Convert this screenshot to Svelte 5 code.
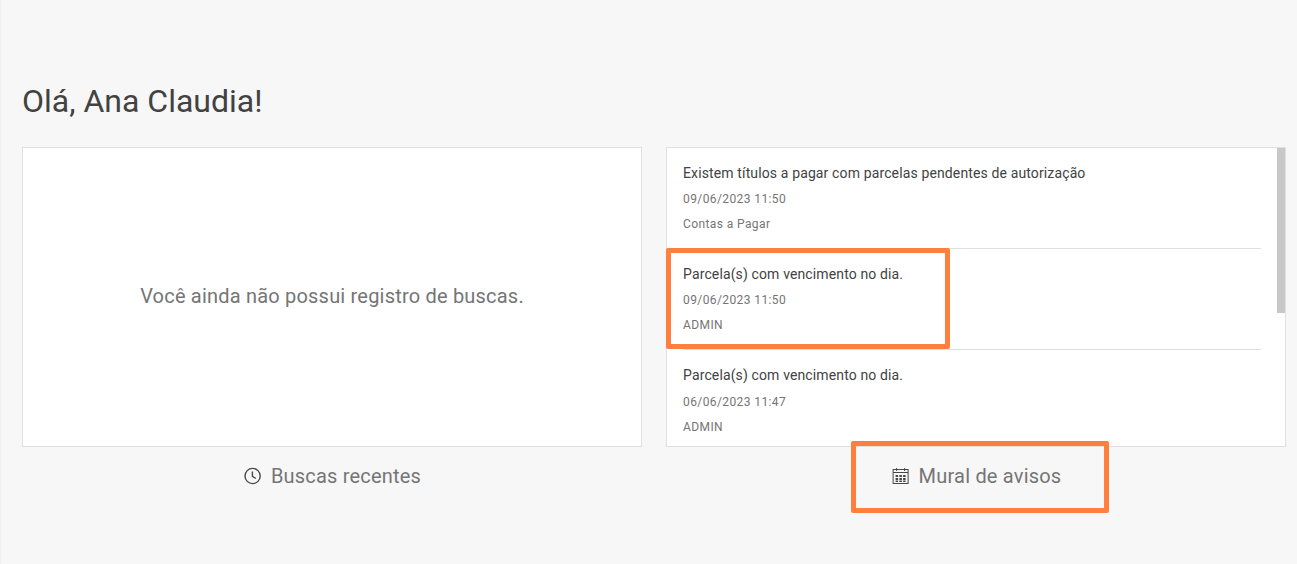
<script>
  const notices = [
    { title: 'Existem títulos a pagar com parcelas pendentes de autorização', date: '09/06/2023 11:50', origin: 'Contas a Pagar' },
    { title: 'Parcela(s) com vencimento no dia.', date: '09/06/2023 11:50', origin: 'ADMIN' },
    { title: 'Parcela(s) com vencimento no dia.', date: '06/06/2023 11:47', origin: 'ADMIN' }
  ];
</script>

<main class="page">
  <h1>Olá, Ana Claudia!</h1>
  <div class="columns">
    <section class="column">
      <div class="card empty">Você ainda não possui registro de buscas.</div>
      <div class="caption">
        <svg width="18" height="18" viewBox="-0.6 0 18 18" fill="none" stroke="#484848" stroke-width="1.4">
          <circle cx="9" cy="9" r="7.6" />
          <path d="M8.800 4.600V9.400L12.200 11.500" />
        </svg>
        <span>Buscas recentes</span>
      </div>
    </section>
    <section class="column">
      <div class="card list">
        <div class="scroll">
          {#each notices as n}
            <div class="notice">
              <div class="title">{n.title}</div>
              <div class="meta date">{n.date}</div>
              <div class="meta origin">{n.origin}</div>
            </div>
          {/each}
        </div>
        <div class="thumb"></div>
        <div class="mark mark-notice"></div>
      </div>
      <div class="caption">
        <svg width="18" height="18" viewBox="-0.6 0 18 18" fill="none" stroke="#484848">
          <rect x="1.500" y="2.500" width="15" height="14" />
          <path d="M1.500 5.500H16.500M5 1V4M13 1V4" />
          <path fill="#484848" stroke="none" d="M4 8h2.500v2H4zM7.800 8h2.500v2H7.800zM11.500 8h2.500v2h-2.500zM4 11h2.500v2H4zM7.800 11h2.500v2H7.800zM11.500 11h2.500v2h-2.500zM4 13.500h2.500v1.500H4zM7.800 13.500h2.500v1.500H7.800zM11.500 13.500h2.500v1.500h-2.500z" />
        </svg>
        <span>Mural de avisos</span>
        <div class="mark mark-caption"></div>
      </div>
    </section>
  </div>
</main>

<style>
  :global(body) {
    margin: 0;
    background: #f7f7f7;
  }
  .page {
    box-sizing: border-box;
    height: 564px;
    padding: 82px 11px 0 21px;
    border-left: 1px solid #efefef;
    font-family: Roboto, sans-serif;
    overflow: hidden;
  }
  h1 {
    margin: 0 0 26px;
    font-size: 32px;
    line-height: 39px;
    font-weight: 400;
    color: #424242;
  }
  .columns {
    display: grid;
    grid-template-columns: 620px 620px;
    gap: 24px;
  }
  .card {
    box-sizing: border-box;
    height: 300px;
    background: #fff;
    border: 1px solid #e0e0e0;
  }
  .empty {
    display: flex;
    align-items: center;
    justify-content: center;
    padding-bottom: 2px;
    font-size: 20px;
    letter-spacing: 0.2px;
    color: #757575;
  }
  .list {
    position: relative;
  }
  .scroll {
    box-sizing: border-box;
    height: 100%;
    overflow: hidden;
    padding: 1px 24px 0 16px;
  }
  .notice {
    height: 100px;
    box-sizing: border-box;
    padding-top: 15px;
    border-bottom: 1px solid #e0e0e0;
  }
  .notice:nth-child(2) {
    height: 101px;
    padding-top: 16px;
  }
  .notice:last-child {
    padding-top: 16px;
    border-bottom: 0;
  }
  .notice:last-child .date {
    margin-top: 10px;
  }
  .title {
    font-size: 14px;
    line-height: 18px;
    letter-spacing: 0.13px;
    color: #424242;
  }
  .meta {
    font-size: 12px;
    line-height: 16px;
    letter-spacing: 0.4px;
    color: #757575;
  }
  .date {
    margin-top: 9px;
  }
  .origin {
    margin-top: 9px;
  }
  .thumb {
    position: absolute;
    top: 0;
    right: 0;
    width: 8px;
    height: 165px;
    background: #c8c8c8;
  }
  .caption {
    position: relative;
    display: flex;
    align-items: center;
    justify-content: center;
    gap: 10px;
    height: 58px;
    font-size: 20px;
    letter-spacing: 0.2px;
    color: #757575;
  }
  .caption svg {
    flex: none;
  }
  .mark {
    position: absolute;
    box-sizing: border-box;
    border: 5px solid #ff7f3f;
    border-radius: 2px;
  }
  .mark-notice {
    left: -1px;
    top: 100px;
    width: 284px;
    height: 101px;
  }
  .mark-caption {
    left: 185px;
    top: -6px;
    width: 258px;
    height: 72px;
  }
</style>
